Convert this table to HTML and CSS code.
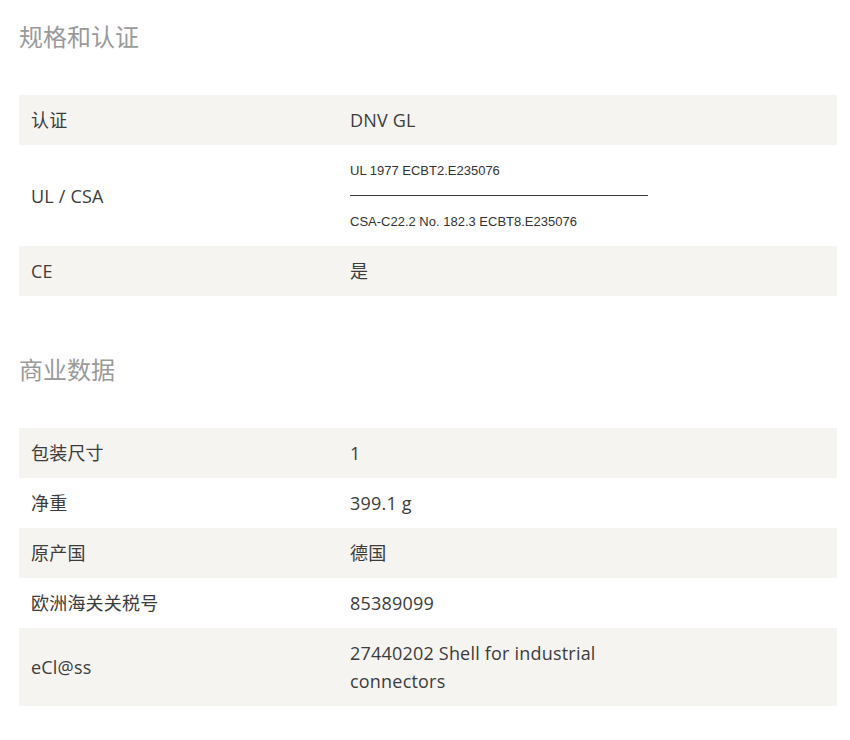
FILE: index.html
```html
<!DOCTYPE html>
<html lang="zh">
<head>
<meta charset="utf-8">
<link rel="stylesheet" href="styles.css">
</head>
<body>
<div class="page">
  <section class="section">
    <h2 class="title">规格和认证</h2>
    <div class="table">
      <div class="row alt"><div class="label">认证</div><div class="value">DNV GL</div></div>
      <div class="row tall"><div class="label">UL / CSA</div>
        <div class="value small">
          <div class="sub">UL 1977 ECBT2.E235076</div>
          <div class="rule"></div>
          <div class="sub">CSA-C22.2 No. 182.3 ECBT8.E235076</div>
        </div>
      </div>
      <div class="row alt"><div class="label">CE</div><div class="value">是</div></div>
    </div>
  </section>
  <section class="section second">
    <h2 class="title">商业数据</h2>
    <div class="table">
      <div class="row alt"><div class="label">包装尺寸</div><div class="value">1</div></div>
      <div class="row"><div class="label">净重</div><div class="value">399.1 g</div></div>
      <div class="row alt"><div class="label">原产国</div><div class="value">德国</div></div>
      <div class="row"><div class="label">欧洲海关关税号</div><div class="value">85389099</div></div>
      <div class="row alt"><div class="label">eCl@ss</div><div class="value">27440202 Shell for industrial connectors</div></div>
    </div>
  </section>
</div>
</body>
</html>
```
FILE: styles.css
```css
html, body {
  margin: 0;
  padding: 0;
  background: #ffffff;
}
body {
  font-family: "Open Sans", "Noto Sans CJK SC", sans-serif;
  color: #3c3c3c;
}
.page {
  width: 818px;
  padding: 20px 0 0 19px;
}
.section.second {
  margin-top: 57px;
}
.title {
  margin: 0 0 43px 0;
  font-family: "Noto Sans CJK SC", sans-serif;
  font-weight: 400;
  font-size: 24px;
  line-height: 32px;
  color: #9a9a9a;
}
.table {
  display: flex;
  flex-direction: column;
}
.row {
  display: grid;
  grid-template-columns: 319px 322px 1fr;
  align-items: center;
  min-height: 50px;
  font-size: 18px;
  line-height: 28px;
  letter-spacing: 0.2px;
}
.row.alt {
  background: #f5f4f1;
}
.label {
  padding: 11px 12px;
}
.value {
  padding: 11px 12px;
}
.value.small {
  padding: 17px 12px 15px 12px;
}
.sub {
  font-family: "Liberation Sans", Arial, sans-serif;
  font-size: 13px;
  line-height: 18px;
  letter-spacing: 0;
  color: #333;
}
.rule {
  height: 1px;
  background: #3a3a3a;
  margin: 15px 0 17px 0;
}
```
